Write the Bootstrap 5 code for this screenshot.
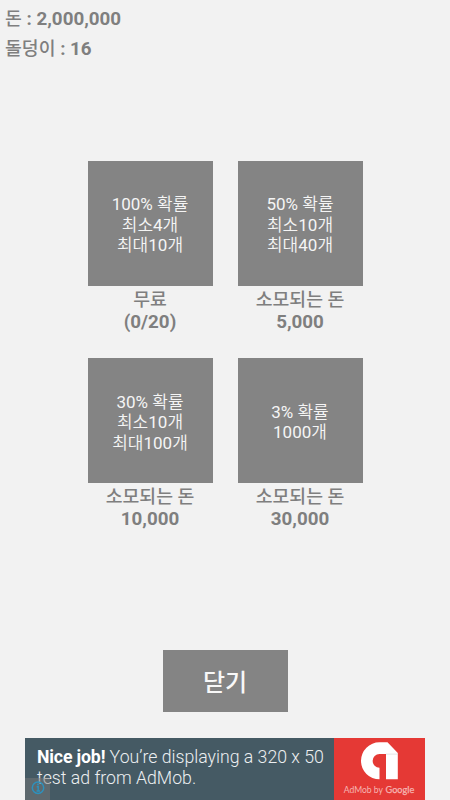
<!DOCTYPE html>
<html lang="ko">
<head>
<meta charset="utf-8">
<meta name="viewport" content="width=device-width, initial-scale=1">
<title>돌덩이</title>
<link href="https://cdn.jsdelivr.net/npm/bootstrap@5.3.0/dist/css/bootstrap.min.css" rel="stylesheet">
<style>
body{background:#f2f2f2;color:#7f7f7f;font-family:Roboto,"Noto Sans CJK KR",sans-serif}
.screen{width:450px;height:800px}
.status{height:161px;padding:4px 5px 0;font-size:18.8px;line-height:30px}
.ko{font-weight:500;font-size:18.3px}
.shop{display:grid;grid-template-columns:125px 125px;gap:25px;row-gap:0;grid-auto-rows:197.4px}
.tile{width:125px;height:125px;background:#848484;color:#f5f5f5;font-size:17px;line-height:20.6px;padding-top:4px;font-weight:400;border:0}
.kl{font-weight:350}
.price{font-size:18.8px;line-height:22px;padding-top:3px}
.close-btn{width:125px;height:62.5px;margin-top:94.2px;background:#848484;color:#f8f8f8;font-size:24px;font-weight:500;line-height:1;border:0;padding-top:4px}
.ad{width:400px;height:62px;background:#455a64;color:#eceff1}
.ad-copy{width:309px;padding:9px 0 0 12px;font-size:17.7px;line-height:21px;font-weight:300}
.ad-copy b{font-weight:700;color:#fff;letter-spacing:-.15px}
.ad-brand{width:91px;background:#e53935}
.ad-info{left:0;bottom:0;width:25px;height:22px;background:rgba(120,120,120,.5)}
</style>
<script src="https://cdn.jsdelivr.net/npm/bootstrap@5.3.0/dist/js/bootstrap.bundle.min.js"></script>
</head>
<body class="m-0">
<main class="screen d-flex flex-column align-items-center overflow-hidden">
  <header class="status w-100 fw-bold">
    <div><span class="ko">돈</span> : 2,000,000</div>
    <div><span class="ko">돌덩이</span> : 16</div>
  </header>
  <section class="shop text-center">
    <div>
      <button class="tile d-flex align-items-center justify-content-center"><span>100% <span class="kl">확률</span><br><span class="kl">최소</span>4<span class="kl">개</span><br><span class="kl">최대</span>10<span class="kl">개</span></span></button>
      <div class="price fw-bold"><span class="ko">무료</span><br>(0/20)</div>
    </div>
    <div>
      <button class="tile d-flex align-items-center justify-content-center"><span>50% <span class="kl">확률</span><br><span class="kl">최소</span>10<span class="kl">개</span><br><span class="kl">최대</span>40<span class="kl">개</span></span></button>
      <div class="price fw-bold"><span class="ko">소모되는 돈</span><br>5,000</div>
    </div>
    <div>
      <button class="tile d-flex align-items-center justify-content-center"><span>30% <span class="kl">확률</span><br><span class="kl">최소</span>10<span class="kl">개</span><br><span class="kl">최대</span>100<span class="kl">개</span></span></button>
      <div class="price fw-bold"><span class="ko">소모되는 돈</span><br>10,000</div>
    </div>
    <div>
      <button class="tile d-flex align-items-center justify-content-center"><span>3% <span class="kl">확률</span><br>1000<span class="kl">개</span></span></button>
      <div class="price fw-bold"><span class="ko">소모되는 돈</span><br>30,000</div>
    </div>
  </section>
  <button class="close-btn flex-shrink-0">닫기</button>
  <aside class="ad d-flex position-relative mt-auto flex-shrink-0">
    <div class="ad-copy text-nowrap"><b>Nice job!</b> You’re displaying a 320 x 50<br>test ad from AdMob.</div>
    <div class="ad-brand">
      <svg class="d-block" width="91" height="62" viewBox="334 738 91 62" font-family="Lato,sans-serif" font-size="9.3" fill="#f6b5b3">
        <path fill="#fff" d="M379.5 742.3H387.5L397.8 753V779.3H386V754H379.5A6.8 6.8 0 0 0 379.5 767.7V779.3A18.5 18.5 0 0 1 379.5 742.3Z"/>
        <path fill="#ccc" d="M386 753.6H397.8V754.6H386Z" opacity=".5"/>
        <text x="343.7" y="793" textLength="39.3" lengthAdjust="spacingAndGlyphs">AdMob by</text>
        <text x="385.5" y="793" textLength="28.8" lengthAdjust="spacingAndGlyphs" stroke="#f6b5b3" stroke-width=".25">Google</text>
      </svg>
    </div>
    <span class="ad-info position-absolute">
      <svg class="d-block" width="25" height="22" viewBox="0 0 25 22" fill="none" stroke="#2d91bd" stroke-width="1.5"><circle cx="13" cy="9.7" r="5.7"/><path d="M11.7 8.7H13.2V13M11.5 13H15" stroke-width="1.4"/><circle cx="13" cy="6.5" r=".9" fill="#2d91bd" stroke="none"/></svg>
    </span>
  </aside>
</main>
</body>
</html>
